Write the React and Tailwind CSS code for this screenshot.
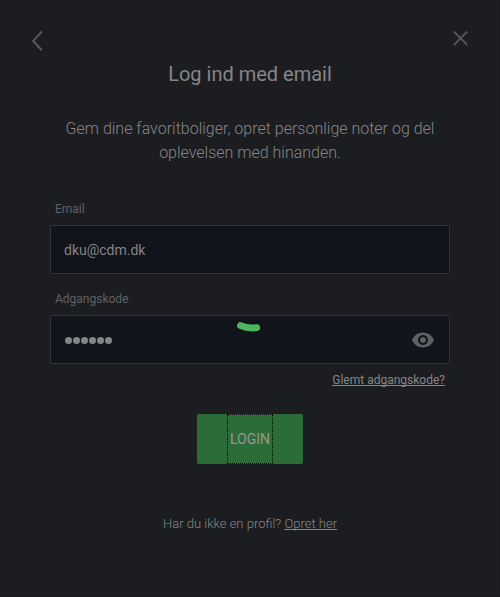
function BackIcon() {
  return (
    <svg width="14" height="24" viewBox="0 0 14 24" fill="none" stroke="#58595c" strokeWidth="2">
      <path d="M11.8 2.5 L3.2 11.9 L11.8 21.3" />
    </svg>
  );
}

function CloseIcon() {
  return (
    <svg width="18" height="18" viewBox="0 0 18 18" fill="none" stroke="#55565a" strokeWidth="1.8">
      <path d="M1.8 2.5 L15.3 16 M15.3 2.5 L1.8 16" />
    </svg>
  );
}

function EyeIcon() {
  return (
    <svg width="24" height="24" viewBox="0 0 24 24" fill="#606163">
      <path d="M12 4.5C7 4.5 2.73 7.61 1 12c1.73 4.39 6 7.5 11 7.5s9.27-3.11 11-7.5c-1.73-4.39-6-7.5-11-7.5zM12 17c-2.76 0-5-2.24-5-5s2.24-5 5-5 5 2.24 5 5-2.24 5-5 5zm0-8c-1.66 0-3 1.34-3 3s1.34 3 3 3 3-1.34 3-3-1.34-3-3-3z" />
    </svg>
  );
}

function Spinner() {
  return (
    <svg className="absolute left-[236px] top-[320px]" width="26" height="14" viewBox="0 0 26 14" fill="none" stroke="#4cb65d" strokeWidth="6.8" strokeLinecap="round">
      <path d="M4.5 5.6 Q12 8.8 20.7 7.7" />
    </svg>
  );
}

function PasswordDots() {
  return (
    <span className="flex gap-[1.5px] pt-0.5 pl-px">
      {[0, 1, 2, 3, 4, 5].map((i) => (
        <span key={i} className="size-[6.5px] rounded-full bg-[#858585]" />
      ))}
    </span>
  );
}

function Field({ label, children }) {
  return (
    <div>
      <div className="h-4 pl-[5px] text-[12px] leading-4 text-[#606164]">{label}</div>
      <div className="mt-2 flex h-[49px] items-center justify-between rounded-[2px] border border-[#333439] bg-[#11141b] pr-[14px] pl-[13px] text-[14px] text-[#858585]">
        {children}
      </div>
    </div>
  );
}

export default function App() {
  return (
    <main className="relative flex h-[597px] w-[500px] flex-col overflow-hidden border-r border-b-2 border-r-[#191a1e] border-b-[#191a1e] bg-[#1c1d21] font-['Roboto',sans-serif] text-[#858687]">
      <header className="flex h-[62px] items-start justify-between pt-[29px] pr-[29px] pl-[30px]">
        <button aria-label="Tilbage"><BackIcon /></button>
        <button aria-label="Luk"><CloseIcon /></button>
      </header>
      <div className="w-[500px] px-[50px]">
        <h1 className="text-center text-[20px] leading-6">Log ind med email</h1>
        <p className="mt-[31px] text-center text-[16px] leading-6 font-light">
          Gem dine favoritboliger, opret personlige noter og del
          <br />
          oplevelsen med hinanden.
        </p>
        <form className="mt-9 flex flex-col gap-[17px]">
          <Field label="Email">
            <span className="pt-0.5">dku@cdm.dk</span>
          </Field>
          <Field label="Adgangskode">
            <PasswordDots />
            <EyeIcon />
          </Field>
        </form>
        <div className="mt-2 pr-[5px] text-right text-[12px] leading-4">
          <a className="underline underline-offset-1 [text-decoration-skip-ink:none]">Glemt adgangskode?</a>
        </div>
        <button className="mx-auto mt-[26px] flex h-[50px] w-[106px] items-center justify-center rounded-[2px] bg-[#2c6c39] text-[14px] text-[#969797]">
          <span className="flex h-[50px] w-[46px] items-center justify-center border border-dotted border-black">LOGIN</span>
        </button>
        <p className="mt-[51px] text-center text-[13px] leading-[18px] font-light">
          Har du ikke en profil? <a className="underline underline-offset-1 [text-decoration-skip-ink:none]">Opret her</a>
        </p>
      </div>
      <Spinner />
    </main>
  );
}
